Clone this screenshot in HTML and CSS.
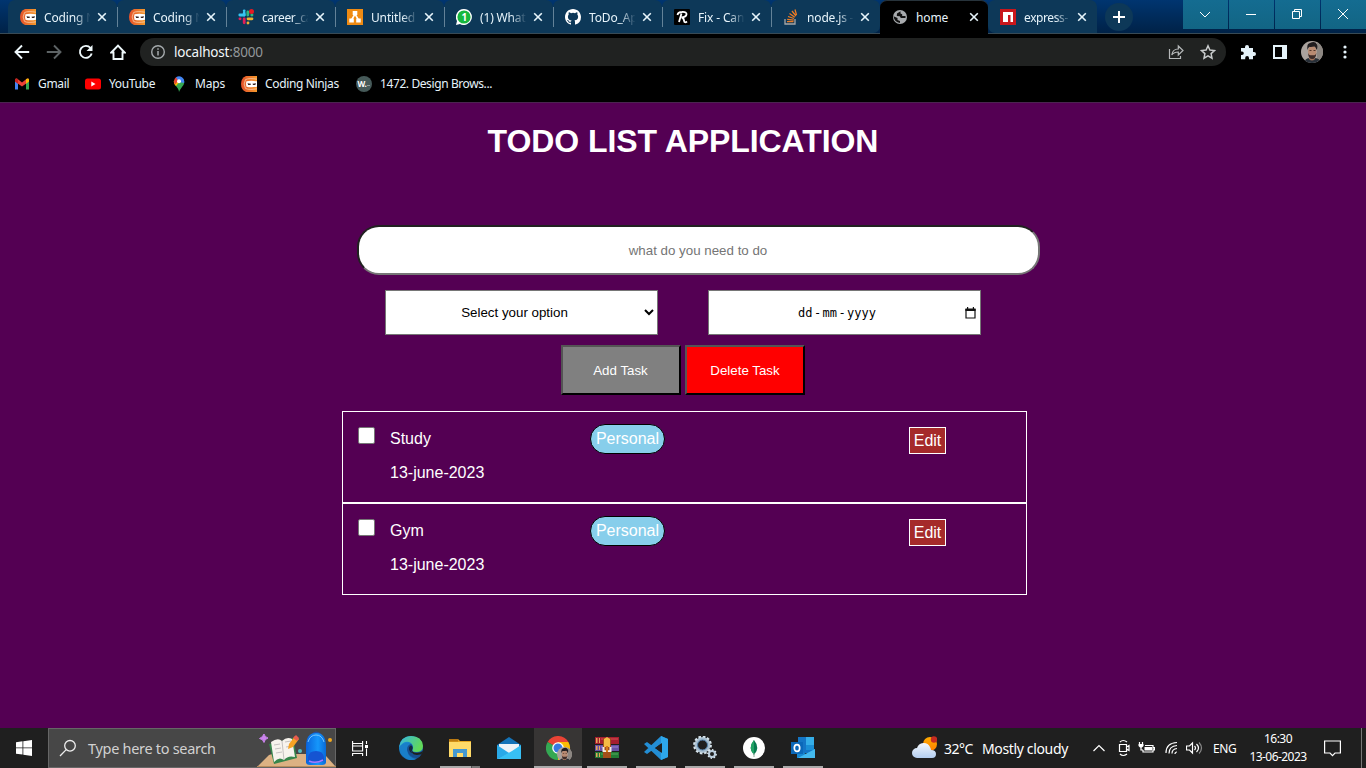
FILE: index.html
```html
<!DOCTYPE html>
<html lang="en">
<head>
<meta charset="utf-8">
<title>home</title>
<link rel="stylesheet" href="styles.css">
</head>
<body>
<svg class="defs" width="0" height="0">
  <defs>
    <linearGradient id="orange" x1="0" x2="1"><stop offset="0" stop-color="#e4502a"/><stop offset="1" stop-color="#f59a2c"/></linearGradient>
    <linearGradient id="edgeA" x1="0" y1="0" x2="1" y2=".4"><stop offset="0" stop-color="#35b5e5"/><stop offset="1" stop-color="#62d957"/></linearGradient>
    <linearGradient id="edgeB" x1="0" y1="0" x2=".5" y2="1"><stop offset="0" stop-color="#1b9de2"/><stop offset="1" stop-color="#1460a8"/></linearGradient>
    <linearGradient id="sun" x1="0" y1="0" x2="0" y2="1"><stop offset="0" stop-color="#ffab00"/><stop offset="1" stop-color="#ff8000"/></linearGradient>
    <linearGradient id="cloud" x1="0" y1="0" x2="0" y2="1"><stop offset="0" stop-color="#f4f8fd"/><stop offset="1" stop-color="#b4cef0"/></linearGradient>
    <linearGradient id="bag" x1="0" x2="1"><stop offset="0" stop-color="#0a63dc"/><stop offset=".6" stop-color="#1597fb"/><stop offset="1" stop-color="#0869d8"/></linearGradient>
    <clipPath id="round"><circle cx="11" cy="11" r="11"/></clipPath>
    <symbol id="ninja" viewBox="0 0 16 16">
      <path d="M5 0h11v16H5Q0 14 0 8T5 0Z" fill="url(#orange)"/>
      <path d="M16 3.200Q8 1.800 4.500 3.600Q1.800 8 4.500 12.400Q8 14.200 16 12.800" fill="none" stroke="#f8c9a8" stroke-width=".8"/>
      <path d="M5.500 5.300Q10 4.200 16 5.300v5.400Q10 11.800 5.500 10.700Q4.500 8 5.500 5.300Z" fill="#fff"/>
      <path d="M6.500 7.200l3.500.5-.5 1.300H7.200zM15 7.200l-3.500.5.5 1.300h2.300z" fill="#392522"/>
    </symbol>
    <symbol id="x" viewBox="0 0 10 10"><path d="M1.200 1.200l7.600 7.600M8.800 1.200L1.200 8.800" stroke="#e7f5fb" stroke-width="1.600"/></symbol>
    <symbol id="face" viewBox="0 0 22 22">
      <g clip-path="url(#round)"><rect width="22" height="22" fill="#aaa29d"/><rect x="16" width="6" height="22" fill="#8d8782"/>
      <path d="M3 22q1-5 6-5h4q6 0 7 5z" fill="#283039"/><path d="M8 13h6v5q-3 3-6 0z" fill="#9d725b"/>
      <ellipse cx="11.200" cy="10.500" rx="4.200" ry="6" fill="#b98b72"/><path d="M7 12q.5 6 4.200 6t4.200-6q-1 2.300-2 2.300h-4q-1.500 0-2.400-2.300z" fill="#3e2c28"/>
      <path d="M6.500 9Q5.500 2.500 9 2q5-2.500 7 1.500 1 3-.5 5.500-.5-3-2-3.500-4 .8-5 .2Q7 6.500 6.500 9z" fill="#211d1f"/><path d="M8.500 9.500h2m2 0h2" stroke="#39231b" stroke-width=".8"/></g>
    </symbol>
  </defs>
</svg>

<header class="browser">
  <div class="tabstrip">
    <div class="tab first"><svg class="fav"><use href="#ninja"/></svg><span class="title">Coding N</span><svg class="close"><use href="#x"/></svg></div>
    <div class="tab"><svg class="fav"><use href="#ninja"/></svg><span class="title">Coding N</span><svg class="close"><use href="#x"/></svg></div>
    <div class="tab"><svg class="fav" viewBox="0 0 16 16" fill="none" stroke-width="2.800" stroke-linecap="round"><path d="M6.200 1.800v0M1.800 6h4.400" stroke="#36c5f0"/><path d="M6.200 4v2" stroke="#36c5f0"/><path d="M9.800 3v3M13.800 6h.2" stroke="#2eb67d"/><path d="M10 9.800h4M10 13.800v.2" stroke="#ecb22e"/><path d="M6.200 9.800v4M1.900 9.800h.2" stroke="#e01e5a"/><circle cx="13.500" cy="2.500" r="2.500" fill="#e51b23"/></svg><span class="title tight">career_ca</span><svg class="close"><use href="#x"/></svg></div>
    <div class="tab"><svg class="fav" viewBox="0 0 16 16"><path fill="#ef8b13" d="M0 0h16v16H0z"/><path d="M8 5L4.500 11M8 5l3.500 6" stroke="#fff" stroke-width="1.500"/><path fill="#fff" d="M5.700 2h4.600v4H5.700zM2.300 9.500h4.500v4H2.300zM9.200 9.500h4.500v4H9.200z"/></svg><span class="title">Untitled</span><svg class="close"><use href="#x"/></svg></div>
    <div class="tab"><svg class="fav" viewBox="0 0 16 16"><path d="M8 0a8 8 0 1 1-4 15L0 16l1-4A8 8 0 0 1 8 0z" fill="#fff"/><circle cx="8" cy="8" r="6.600" fill="#16b83e"/><text x="5.500" y="11.700" class="badge-num">1</text></svg><span class="title">(1) What</span><svg class="close"><use href="#x"/></svg></div>
    <div class="tab"><svg class="fav" viewBox="0 0 16 16"><path fill="#fff" d="M8 0C3.580 0 0 3.580 0 8c0 3.540 2.290 6.530 5.470 7.590.4.070.550-.170.550-.380 0-.190-.010-.820-.010-1.490-2.010.370-2.530-.490-2.690-.940-.090-.230-.480-.940-.820-1.130-.280-.150-.680-.520-.010-.530.630-.010 1.080.580 1.230.820.720 1.210 1.870.870 2.330.660.070-.520.280-.870.510-1.070-1.780-.200-3.640-.890-3.640-3.950 0-.870.310-1.590.820-2.150-.080-.200-.360-1.020.080-2.120 0 0 .670-.210 2.200.820a7.600 7.600 0 0 1 4 0c1.530-1.040 2.200-.820 2.200-.820.440 1.100.160 1.920.080 2.120.510.560.820 1.270.820 2.150 0 3.070-1.870 3.750-3.650 3.950.290.250.540.730.540 1.480 0 1.070-.010 1.930-.010 2.200 0 .210.150.460.550.380A8 8 0 0 0 16 8c0-4.420-3.580-8-8-8z"/></svg><span class="title">ToDo_Ap</span><svg class="close"><use href="#x"/></svg></div>
    <div class="tab"><svg class="fav" viewBox="0 0 16 16"><rect width="16" height="16" rx="1" fill="#000"/><path d="M7.500 4.500L5 13M3.500 6Q4 3 8 3q5-.3 4.500 2.500Q12 8 7.500 8.500q2 0 2.500 3t3 1" fill="none" stroke="#fff" stroke-width="1.800"/></svg><span class="title">Fix - Can</span><svg class="close"><use href="#x"/></svg></div>
    <div class="tab plain"><svg class="fav" viewBox="0 0 16 16" fill="none"><path d="M2 10v5h10v-5" stroke="#a7a7a7" stroke-width="1.300"/><path d="M4 12.700h6.500M4.200 10.300l6.500.8M5 7.500l6 2M6.500 4.500l5.300 3.700M9 2l4 5M12 .5l1.500 5.500" stroke="#ef7c23" stroke-width="1.300"/></svg><span class="title">node.js -</span><svg class="close"><use href="#x"/></svg></div>
    <div class="tab active"><svg class="fav" viewBox="0 0 16 16"><circle cx="8" cy="8" r="7" fill="#a8abae"/><path d="M8.500 2.200L5 4.500 4.800 7l3 .3 1 1.700h4.700V7H10.200V5.200L8.500 4.500zM1.500 7.300l4 1.700v2l2.500 1v2Q2.500 13.500 1.500 7.300z" fill="#111"/></svg><span class="title">home</span><svg class="close"><use href="#x"/></svg></div>
    <div class="tab last"><svg class="fav" viewBox="0 0 16 16"><path fill="#c9171c" d="M0 0h16v16H0z"/><path fill="#fff" d="M3 3h10v10h-2.500V6H8v7H3z"/></svg><span class="title tight">express-</span><svg class="close"><use href="#x"/></svg></div>
    <div class="newtab"><svg width="12" height="12" viewBox="0 0 12 12"><path d="M6 0v12M0 6h12" stroke="#fff" stroke-width="2"/></svg></div>
    <div class="winbtns">
      <span><svg width="12" height="12" viewBox="0 0 12 12"><path d="M1 4l5 5 5-5"/></svg></span>
      <span><svg width="12" height="12" viewBox="0 0 12 12"><path d="M1 6.500h10"/></svg></span>
      <span><svg width="12" height="12" viewBox="0 0 12 12"><path d="M1.500 3.500h7v7h-7zM3.500 3.500v-2h7v7h-2"/></svg></span>
      <span><svg width="12" height="12" viewBox="0 0 12 12"><path d="M1 1l10 10M11 1L1 11"/></svg></span>
    </div>
  </div>

  <div class="toolbar">
    <svg class="nav" viewBox="0 0 16 16"><path d="M15.200 8H2M8 1.500L1.500 8 8 14.500"/></svg>
    <svg class="nav dim" viewBox="0 0 16 16"><path d="M.8 8H14M8 1.500L14.500 8 8 14.500"/></svg>
    <svg class="nav" viewBox="0 0 16 16"><path d="M13.700 9.500A6 6 0 1 1 12.500 4"/><path d="M14.500 1v6h-6z" fill="#eef8fb" stroke="none"/></svg>
    <svg class="nav home" viewBox="0 0 16 16"><path d="M1.300 8.500L8 1.500l6.700 7h-2.200V15h-9V8.500z"/></svg>
    <div class="omnibox">
      <svg width="16" height="16" viewBox="0 0 16 16"><circle cx="8" cy="8" r="6.300" fill="none" stroke="#a5aaad" stroke-width="1.400"/><path d="M8 7v4.500M8 4.200v1.600" stroke="#a5aaad" stroke-width="1.500"/></svg>
      <span class="url">localhost<i>:8000</i></span>
      <svg class="share" width="16" height="16" viewBox="0 0 16 16" fill="none" stroke="#b5b8b9" stroke-width="1.200"><path d="M1.500 5v9.500h11V12"/><path d="M3.800 11q.8-6 6.500-6V2l4.700 4.500L10.300 11V8Q6 8 3.800 11z"/></svg>
      <svg width="16" height="16" viewBox="0 0 16 16"><path d="M8 1.800l1.900 4.200 4.600.5-3.400 3.100.9 4.600-4-2.300-4 2.300.9-4.600L1.500 6.500 6.100 6z" fill="none" stroke="#c8cbcc" stroke-width="1.500"/></svg>
    </div>
    <svg class="puzzle" width="16" height="16" viewBox="0 0 16 16"><path d="M1 4h4V3a2 2 0 0 1 4 0v1h4v4h1a2 2 0 0 1 0 4h-1v3.200H9V14a1.900 1.900 0 0 0-3.800 0v1.200H1V11h1a1.800 1.800 0 0 0 0-3.600H1z" fill="#e5f3fa"/></svg>
    <svg class="panel" width="14" height="14" viewBox="0 0 14 14"><path fill="#e5f3fa" d="M0 0h14v14H0z"/><path d="M2 2h7v10H2z"/></svg>
    <svg class="avatar" width="22" height="22"><use href="#face"/></svg>
    <svg class="dots" width="4" height="14" viewBox="0 0 4 14" fill="#e5f3fa"><circle cx="2" cy="2" r="1.600"/><circle cx="2" cy="7" r="1.600"/><circle cx="2" cy="12" r="1.600"/></svg>
  </div>

  <nav class="bookmarks">
    <a><svg viewBox="0 0 16 16"><path d="M1 4v9.500h3V7z" fill="#4285f4"/><path d="M15 4v9.500h-3V7z" fill="#34a853"/><path d="M1 4q0-2 2-1.500l5 4 5-4Q15 2 15 4v1.500L8 10.500 1 5.500z" fill="#ea4335"/><path d="M12 3.200q3-1.700 3 .8v1.500l-3 2.200z" fill="#fbbc04"/><path d="M1 4v1.500l3 2.200V3.300Q1.500 1.500 1 4z" fill="#c5221f"/></svg><span>Gmail</span></a>
    <a class="yt"><svg viewBox="0 0 16 16"><rect y="2.500" width="16" height="11" rx="2.500" fill="#f00"/><path d="M6.300 5.600L10.500 8l-4.200 2.400z" fill="#fff"/></svg><span>YouTube</span></a>
    <a class="maps"><svg viewBox="0 0 16 16"><path d="M8 16Q8 13 4 9L12 3q3 3.500-1 8-2 2.500-3 5z" fill="#34a853"/><path d="M2.800 5.500Q2.600 8 5 10l6-7L6 1z" fill="#fbbc04"/><path d="M3 6Q2.500 3 5 1.200L8 4 4 8.500z" fill="#ea4335"/><path d="M5 1.200Q8-.8 11 1.200 14 3 13 7L8 6z" fill="#4285f4"/><circle cx="8" cy="5.300" r="2" fill="#fff"/></svg><span>Maps</span></a>
    <a class="cn"><svg><use href="#ninja"/></svg><span>Coding Ninjas</span></a>
    <a class="wb"><svg viewBox="0 0 16 16"><circle cx="8" cy="8" r="8" fill="#465a59"/><text x="1.500" y="10.800" class="wtext">W.</text><path d="M11 9.500h3" stroke="#8c9c9a"/></svg><span>1472. Design Brows...</span></a>
  </nav>
</header>

<main class="page">
  <h1>TODO LIST APPLICATION</h1>
  <form class="todo-form">
    <input class="task-input" type="text" placeholder="what do you need to do">
    <div class="fields">
      <select class="field"><option>Select your option</option></select>
      <div class="field date"><span class="seg">dd</span><span>-</span><span class="seg mm">mm</span><span>-</span><span class="seg">yyyy</span>
        <svg width="11" height="12" viewBox="0 0 11 12"><path d="M1 2.500h9v8.500H1z" fill="none" stroke="#111" stroke-width="1.200"/><path d="M.4 1.500h10.200V4H.4zM2 0h1.200v2H2zM7.800 0H9v2H7.800z" fill="#111"/></svg>
      </div>
    </div>
    <div class="actions"><button type="button" class="btn add">Add Task</button><button type="button" class="btn delete">Delete Task</button></div>
  </form>
  <ul class="tasks">
    <li class="task"><span class="check"></span><div class="what"><p>Study</p><p>13-june-2023</p></div><span class="tag">Personal</span><a class="edit">Edit</a></li>
    <li class="task"><span class="check"></span><div class="what"><p>Gym</p><p>13-june-2023</p></div><span class="tag">Personal</span><a class="edit">Edit</a></li>
  </ul>
</main>

<footer class="taskbar">
  <div class="start"><svg width="16" height="16" viewBox="0 0 16 16" fill="#fff"><path d="M0 2.200l6.500-.9v6.200H0zM7.300 1.200L16 0v7.500H7.300zM0 8.300h6.500v6.300L0 13.700zM7.300 8.300H16V16l-8.700-1.200z"/></svg></div>
  <div class="search">
    <svg class="glass" width="18" height="18" viewBox="0 0 18 18" fill="none" stroke="#eee" stroke-width="1.300"><circle cx="11" cy="6.800" r="5.300"/><path d="M7.200 10.600L1 17"/></svg>
    <span>Type here to search</span>
    <svg class="doodle" width="79" height="38" viewBox="0 0 79 38">
      <path d="M0 38L12 26q2-1 5-1h47q3 0 5 2l10 11z" fill="#dcb183"/><path d="M0 37h79v1H0z" fill="#b88b5b"/>
      <path d="M7 5q.6 3 4 4-3.400 1-4 4.500Q6 10 2.500 9.500 6 8 7 5z" fill="#ca83ed" stroke="#ca83ed"/>
      <path d="M12 15l24-6 4 20-23 6z" fill="#36864b"/><path d="M14 13q7-5 11-1 5-5 10-2l3 18q-7-2-11 3-5-4-10 2z" fill="#f7f3ed"/><path d="M25 12l2 19M17 16l6-1M18 20l6-1M19 24l6-1M28 13l6-1M29 18l6-1" stroke="#b8b4b4" stroke-width=".8"/>
      <path d="M31 20l1-5 6-8 4 3-6 8z" fill="#f6a324"/><path d="M36 9l3-3 3 3-2 3z" fill="#e85b4f"/><circle cx="43" cy="22" r="2" fill="#55bbbf"/><circle cx="73" cy="11" r="2" fill="#f2a91d"/>
      <path d="M55 6q4-5 9 0" stroke="#274f9f" stroke-width="2" fill="none"/><path d="M49 17Q49 4 59 4t10 13v16q0 3-4 3H53q-4 0-4-3z" fill="url(#bag)"/><path d="M51 13q2-7 8-7t8 7" fill="none" stroke="#76c6ff"/><path d="M51 28q1-6 8-6t8 6v4q-8 3-16 0z" fill="#1554d2"/><path d="M52 32q7 3 14-1" stroke="#a77bff" stroke-width="1.500" fill="none"/>
    </svg>
  </div>
  <div class="app view"><svg width="16" height="16" viewBox="0 0 16 16" fill="none" stroke="#fff" stroke-width="1.100"><path d="M.6 1v2.500h10V1M.6 3.500V6M10.600 3.500V6M.6 6h10v5H.6zM.6 16v-2.500h10V16M14.500 1v3M14.500 8.500V16"/><path d="M13 5h3v3h-3z" fill="#fff" stroke="none"/></svg></div>
  <div class="app"><svg viewBox="0 0 24 24"><circle cx="12" cy="12" r="12" fill="url(#edgeB)"/><path d="M.2 11Q2 0 12 0q11 0 12 10 0 6-7 6-4 0-3.300-2.500Q15 10 12 7 6 3 .2 11z" fill="url(#edgeA)"/><path d="M1 10q6-5 11-2-4 1-4 6 1 8 9 9Q10 26 5 21 0 17 1 10z" fill="#197fc9"/><path d="M12 8q-4 1-4 6 2 8 10 8 3-1 4.500-4-6 3-9-1-2-2-.2-4.500Q14.500 10 12 8z" fill="#174f91"/><path d="M13 13q-1 3.500 5 3.700 4 0 6-2l-1.500 3.600Q15 20.500 13 16.500z" fill="#1f1f1f"/><path d="M12 9.500q-2.500 1-2 4t3.500 4q-1.500-2-.2-4Q14.500 11 12 9.500z" fill="#14283d"/></svg></div>
  <div class="app open explorer"><svg viewBox="0 0 24 24"><path d="M1 3h9l2 2h11v16H1z" fill="#e6a51f"/><path d="M1 6h22v15H1z" fill="#ffda69"/><path d="M1 3h9v2.500H1z" fill="#bb7911"/><path d="M5 13h14v8h-4v-4H9v4H5z" fill="#4398d1"/></svg></div>
  <div class="app"><svg viewBox="0 0 24 24"><path d="M0 9L12 1l12 8v14H0z" fill="#1473b8"/><path d="M2 8h20v9H2z" fill="#eef3f7"/><path d="M0 9l12 8L0 23z" fill="#29a9e8"/><path d="M24 9v14H0l15-8z" fill="#38c0f4"/></svg></div>
  <div class="app open chrome"><svg viewBox="0 0 26 24"><path d="M12 12L1.600 6a12 12 0 0 1 20.800 0z" fill="#ea4335"/><path d="M12 12L1.600 6A12 12 0 0 0 12 24l5-7z" fill="#34a853"/><path d="M12 12V6h10.400A12 12 0 0 1 12 24z" fill="#fbbc04"/><circle cx="12" cy="12" r="5.800" fill="#fff"/><circle cx="12" cy="12" r="4.500" fill="#3879e2"/><use href="#face" x="11" y="11" width="15" height="15"/></svg></div>
  <div class="app open"><svg viewBox="0 0 24 24"><path d="M0 1h24v7H0z" fill="#a51f2f"/><path d="M0 9h24v6H0z" fill="#6850a5"/><path d="M0 16h24v6H0z" fill="#237b35"/><path d="M1 2h1.500v5H1zM4 2h1v5H4zM1 10h1.500v4H1zM4 10h1v4H4zM1 17h1.500v4H1zM4 17h1v4H4z" fill="#e3a65c"/><path d="M6 3h17" stroke="#db4f57"/><path d="M6 11h17" stroke="#9986cc"/><path d="M6 18h17" stroke="#53a85d"/><path d="M8 2h8v20H8z" fill="#a34e1a"/><path d="M9 3l3-2 3 2v8H9z" fill="#f5bc45"/><path d="M7.500 11v5h9v-5h-2v3.300h-5V11z" fill="#f3eee3"/><path d="M12 10v6" stroke="#d67a17" stroke-width="2"/></svg></div>
  <div class="app open"><svg viewBox="0 0 24 24"><path d="M17 0l7 3v18l-7 3L0 8l3-2 15 11V7L3 18l-3-2z" fill="#238ed5"/><path d="M17 0l7 3v18l-7 3z" fill="#2da7eb"/><path d="M18 7v10l-7-5z" fill="#1f1f1f"/></svg></div>
  <div class="app open"><svg viewBox="0 0 24 24" fill="none"><circle cx="9.500" cy="9" r="6.500" stroke="#a7bed0" stroke-width="3"/><circle cx="9.500" cy="9" r="8.400" stroke="#d6e3eb" stroke-width="2" stroke-dasharray="2.600 1.800"/><circle cx="9.500" cy="9" r="5" stroke="#507ea9"/><circle cx="19" cy="18" r="3" stroke="#b9cddd" stroke-width="2"/><circle cx="19" cy="18" r="4.200" stroke="#dbe6ed" stroke-width="1.400" stroke-dasharray="1.500 1.700"/></svg></div>
  <div class="app open"><svg viewBox="0 0 24 24"><circle cx="12" cy="12" r="11" fill="#fff"/><path d="M12 4q6.500 8 0 15-6.500-7 0-15z" fill="#087b50"/><path d="M12 4v15q-6.500-7 0-15z" fill="#21a365"/><path d="M12 17v4" stroke="#91a99c"/></svg></div>
  <div class="app open"><svg viewBox="0 0 24 24"><path d="M7 1h16v16H7z" fill="#1475c5"/><path d="M15 1h8v8h-8z" fill="#35aee8"/><path d="M15 9h8v5h-8z" fill="#1a8ed5"/><path d="M6 13l9 5 9-5v9H6z" fill="#1688d3"/><path d="M24 13v9H7z" fill="#43b9ee"/><path d="M0 6h12v12H0z" fill="#0b68b9"/><ellipse cx="6" cy="12" rx="2.700" ry="3.400" fill="none" stroke="#fff" stroke-width="1.700"/></svg></div>
  <div class="tray">
    <svg class="weather" width="25" height="23" viewBox="0 0 25 23"><circle cx="18" cy="8" r="7" fill="url(#sun)"/><circle cx="22" cy="3.500" r="3.200" fill="#c62b20"/><path d="M5 22a5 5 0 0 1 0-10 7 7 0 0 1 13-1q1 2 1 3 5 0 5 4 0 4-4 4z" fill="url(#cloud)"/></svg>
    <span class="temp">32°C</span><span class="cond">Mostly cloudy</span>
    <svg class="chev" width="12" height="8" viewBox="0 0 12 8"><path d="M.5 7L6 1.500 11.500 7"/></svg>
    <svg class="cam" width="12" height="18" viewBox="0 0 12 18"><path d="M1.500 5.500h7v7h-7zM8.500 8l2.500-1.500v5L8.500 10M2 3q3-3 7 0M2 15q3 3 7 0"/></svg>
    <svg class="batt" width="17" height="14" viewBox="0 0 17 14"><path d="M7 4.500h8v6.500H5V9M15 6.500h1.500v2.500H15M1.500 1v2M4.500 1v2M3 6v3h2"/><path d="M6.500 6h7.500v3.500H6.500zM.5 3h5v2L4 6.500H2L.5 5z" fill="#fff" stroke="none"/></svg>
    <svg class="wifi" width="14" height="14" viewBox="0 0 14 14"><path d="M1 12Q1 2 12 1.500M4 12.500Q4 5 12 4.500M7 12.500Q7 8 12 7.500M10 13q0-2 2-2"/></svg>
    <svg class="sound" width="17" height="14" viewBox="0 0 17 14"><path d="M.5 5h3l3-3v10l-3-3h-3zM8.500 5q2 2 0 4M10.500 3q4 4 0 8"/><path d="M13 1.500q5 5.500 0 11" stroke="#888"/></svg>
    <span class="lang">ENG</span>
    <div class="clock"><span>16:30</span><span>13-06-2023</span></div>
    <svg class="note" width="17" height="17" viewBox="0 0 17 17"><path d="M.6 1h15.800v12H11l-2.500 2.700L6 13H.6z"/></svg>
    <span class="peek"></span>
  </div>
</footer>
</body>
</html>
```
FILE: styles.css
```css
* { box-sizing: border-box; }
body { margin: 0; width: 1366px; height: 768px; overflow: hidden; display: flex; flex-direction: column; background: #540053; font-family: "Liberation Sans", Arial, sans-serif; }
.defs { position: absolute; }
svg { flex: none; display: block; }

.browser { height: 103px; flex: none; background: #000; border-bottom: 1px solid #4b2450; font-family: "Noto Sans", "Segoe UI", sans-serif; color: #e6f3fa; font-size: 12px; }
.tabstrip { height: 34px; display: flex; align-items: stretch; padding-left: 8px; background: linear-gradient(#003570, #002247); border-bottom: 1px solid #384a55; }
.tab { width: 109px; flex: none; display: flex; align-items: center; padding: 1px 0 0 12px; background: linear-gradient(#638298, #638298) left 0 top 7px / 1px 20px no-repeat #0d3858; border-radius: 7px 7px 0 0; }
.tab.first, .tab.active, .tab.last { background-image: none; }
.tab.plain { border-bottom-right-radius: 7px; }
.tab.active { width: 108px; background: #000; margin-bottom: -1px; padding: 0 0 1px 12px; border-top: 1px solid #27333b; }
.tab.last { border-bottom-left-radius: 7px; }
.fav { width: 16px; height: 16px; }
.title { width: 48px; margin-left: 8px; white-space: nowrap; letter-spacing: -0.15px; -webkit-mask-image: linear-gradient(90deg, #000 65%, transparent 97%); mask-image: linear-gradient(90deg, #000 65%, transparent 97%); }
.title.tight { letter-spacing: -0.4px; }
.active .title { -webkit-mask-image: none; mask-image: none; }
.close { width: 10px; height: 10px; margin-left: 5px; }
.badge-num { font: bold 10px "Noto Sans", sans-serif; fill: #fff; }
.wtext { font: bold 8px "Noto Sans", sans-serif; fill: #fff; }
.newtab { width: 28px; height: 28px; margin: 3px 0 0 8px; border-radius: 50%; background: #0d3858; display: grid; place-items: center; }
.winbtns { margin-left: auto; width: 183px; height: 29px; display: grid; grid-template-columns: repeat(4, 1fr); gap: 1px; }
.winbtns span { background: linear-gradient(#146c91, #126584); display: grid; place-items: center; padding: 0 2px 1px 0; }
.winbtns path { fill: none; stroke: #fff; stroke-width: 1; }

.toolbar { height: 36px; display: flex; align-items: center; padding-left: 14px; }
.nav { width: 16px; height: 16px; margin-right: 16px; fill: none; stroke: #eef8fb; stroke-width: 1.900; }
.nav.dim { stroke: #5d6365; }
.nav.home { margin-right: 14px; }
.omnibox { width: 1086px; height: 28px; border-radius: 14px; background: #202221; display: flex; align-items: center; padding: 0 10px; }
.url { margin-left: 8px; margin-top: -1px; font-size: 13.500px; color: #f1f7fa; flex: 1; letter-spacing: -0.2px; }
.url i { color: #92979a; font-style: normal; }
.share { margin-right: 16px; }
.puzzle { margin-left: 14px; }
.panel { margin-left: 17px; }
.avatar { margin-left: 14px; }
.dots { margin-left: 20px; }
.bookmarks { height: 31px; display: flex; align-items: center; padding: 0 0 4px 14px; }
.bookmarks a { width: 71px; display: flex; align-items: center; gap: 8px; white-space: nowrap; letter-spacing: -0.35px; }
.bookmarks a svg { width: 16px; height: 16px; }
.bookmarks .yt { width: 86px; }
.bookmarks .maps { width: 70px; letter-spacing: -0.2px; }
.bookmarks .cn { width: 115px; }
.bookmarks .wb { width: auto; letter-spacing: -0.4px; }

.page { height: 625px; flex: none; }
h1 { margin: 0; padding-top: 20px; height: 122px; text-align: center; color: #fff; font-size: 32px; line-height: 37px; letter-spacing: -0.07px; }
.todo-form { display: flex; flex-direction: column; align-items: center; }
.task-input { width: 683px; height: 50px; margin: 0 0 0 31px; padding: 2px 4px 1px 3px; text-align: center; border: 2px inset #767676; border-radius: 22px; font: 13.333px "Liberation Sans", Arial, sans-serif; background: #fff; }
.task-input::placeholder { color: #757575; }
.fields { display: flex; gap: 50px; margin-top: 15px; }
.field { width: 273px; height: 45px; background: #fff; border: 1px solid #767676; border-radius: 0; color: #000; }
select.field { text-align: center; text-align-last: center; padding-right: 2px; font: 13.333px "Liberation Sans", Arial, sans-serif; }
.date { display: flex; align-items: center; padding-left: 89px; padding-right: 4px; font: 12px "DejaVu Sans Mono", monospace; white-space: pre; }
.date span { flex: none; width: 10px; text-align: center; }
.date .seg { width: 14.500px; }
.date .seg:last-of-type { width: 29px; }
.date svg { margin-left: auto; }
.actions { display: flex; gap: 4px; margin-top: 10px; }
.btn { width: 120px; height: 50px; border: 2px outset #000; color: #fff; font: 13.333px "Liberation Sans", Arial, sans-serif; padding: 0; }
.add { background: #808080; padding-right: 1px; }
.delete { background: #f00; }
.tasks { list-style: none; margin: 16px 0 0 342px; padding: 0; width: 685px; color: #fff; font-size: 16px; }
.task { height: 92px; border: 1px solid #fff; display: flex; align-items: flex-start; padding-left: 15px; }
.check { width: 17px; height: 17px; margin-top: 15px; background: #fff; border: 1px solid #767676; border-radius: 2px; }
.what { width: 200px; margin-left: 15px; padding-top: 18px; }
.what p { margin: 0; height: 34px; line-height: 18px; }
.tag { width: 75px; height: 30px; margin-top: 12px; border: 1px solid #000; border-radius: 15px; background: #87ceeb; line-height: 27px; text-align: center; }
.edit { width: 37px; height: 27px; margin: 15px 0 0 244px; border: 1px solid #fff; background: #a52a2a; line-height: 25px; text-align: center; }

.taskbar { height: 40px; flex: none; display: flex; background: #1f1f1f; font-family: "Noto Sans", "Segoe UI", sans-serif; color: #fff; }
.start { width: 48px; display: grid; place-items: center; }
.search { width: 288px; background: #474747; border: 1px solid #666; display: flex; align-items: center; padding-left: 10px; color: #d1d1d1; font-size: 14.500px; }
.search > span { margin-left: 11px; letter-spacing: -0.3px; white-space: nowrap; }
.doodle { margin-left: auto; margin-right: -1px; }
.app { width: 48px; margin-right: 1px; display: grid; place-items: center; background-repeat: no-repeat; background-position: center bottom; background-size: 40px 2px; }
.app svg { width: 24px; height: 24px; }
.app.view { margin-right: 3px; }
.app.view svg { width: 16px; height: 16px; }
.app.open { background-image: linear-gradient(#aaa, #aaa); }
.app.explorer { background-image: linear-gradient(90deg, #aaa 78%, #444 78%, #777 81%); }
.app.chrome { background-color: #373534; background-size: 48px 2px; }
.chrome svg { width: 26px; margin-left: 2px; }
.tray { flex: 1; display: flex; align-items: center; padding-left: 84px; white-space: nowrap; }
.chev, .cam, .batt, .wifi, .sound, .note { fill: none; stroke: #fff; stroke-width: 1.200; }
.temp { margin-left: 7px; width: 38px; font-size: 14px; letter-spacing: -0.5px; }
.cond { width: 101px; font-size: 14px; letter-spacing: -0.35px; }
.weather { margin-top: -2px; }
.chev { margin-left: 10px; }
.cam { margin-left: 13px; }
.batt { margin-left: 8px; }
.wifi { margin-left: 10px; }
.sound { margin-left: 7px; }
.lang { width: 36px; margin-left: 10px; font-size: 12px; letter-spacing: -0.4px; }
.clock { width: 58px; display: flex; flex-direction: column; align-items: center; font-size: 12px; line-height: 18px; letter-spacing: -0.55px; }
.note { margin-left: 17px; }
.peek { width: 1px; height: 40px; margin-left: auto; margin-right: 4px; background: #777; }
```
